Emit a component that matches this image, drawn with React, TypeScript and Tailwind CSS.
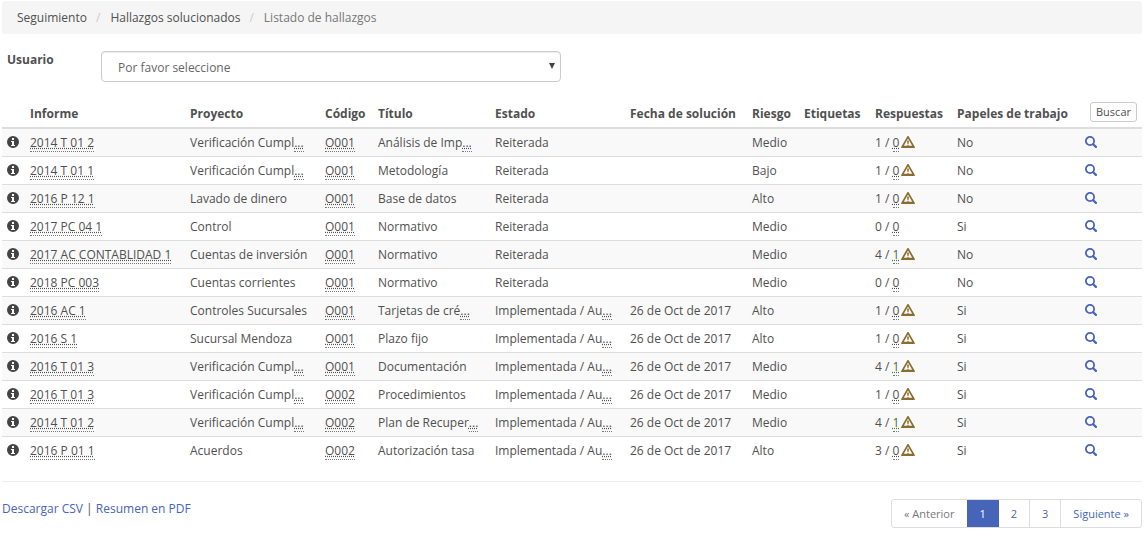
import React from "react";

type Row = {
  informe: string;
  proyecto: string;
  codigo: string;
  titulo: string;
  estado: string;
  fecha: string;
  riesgo: string;
  total: number;
  propias: number;
  papeles: string;
};

const make = (
  informe: string,
  proyecto: string,
  codigo: string,
  titulo: string,
  estado: string,
  fecha: string,
  riesgo: string,
  total: number,
  propias: number,
  papeles: string,
): Row => ({ informe, proyecto, codigo, titulo, estado, fecha, riesgo, total, propias, papeles });

const IMPL = "Implementada / Au...";
const FECHA = "26 de Oct de 2017";

const rows: Row[] = [
  make("2014 T 01 2", "Verificación Cumpl...", "O001", "Análisis de Imp...", "Reiterada", "", "Medio", 1, 0, "No"),
  make("2014 T 01 1", "Verificación Cumpl...", "O001", "Metodología", "Reiterada", "", "Bajo", 1, 0, "No"),
  make("2016 P 12 1", "Lavado de dinero", "O001", "Base de datos", "Reiterada", "", "Alto", 1, 0, "No"),
  make("2017 PC 04 1", "Control", "O001", "Normativo", "Reiterada", "", "Medio", 0, 0, "Si"),
  make("2017 AC CONTABLIDAD 1", "Cuentas de inversión", "O001", "Normativo", "Reiterada", "", "Medio", 4, 1, "No"),
  make("2018 PC 003", "Cuentas corrientes", "O001", "Normativo", "Reiterada", "", "Medio", 0, 0, "No"),
  make("2016 AC 1", "Controles Sucursales", "O001", "Tarjetas de cré...", IMPL, FECHA, "Alto", 1, 0, "Si"),
  make("2016 S 1", "Sucursal Mendoza", "O001", "Plazo fijo", IMPL, FECHA, "Alto", 1, 0, "Si"),
  make("2016 T 01 3", "Verificación Cumpl...", "O001", "Documentación", IMPL, FECHA, "Medio", 4, 1, "Si"),
  make("2016 T 01 3", "Verificación Cumpl...", "O002", "Procedimientos", IMPL, FECHA, "Medio", 1, 0, "Si"),
  make("2014 T 01 2", "Verificación Cumpl...", "O002", "Plan de Recuper...", IMPL, FECHA, "Medio", 4, 1, "Si"),
  make("2016 P 01 1", "Acuerdos", "O002", "Autorización tasa", IMPL, FECHA, "Alto", 3, 0, "Si"),
];

function Abbr({ children, className = "" }: { children: React.ReactNode; className?: string }) {
  return (
    <abbr className={`cursor-help border-b border-dotted border-[#777777] underline decoration-dotted ${className}`}>
      {children}
    </abbr>
  );
}

function Truncated({ text }: { text: string }) {
  if (!text.endsWith("...")) return <>{text}</>;
  return (
    <>
      {text.slice(0, -3)}
      <Abbr>...</Abbr>
    </>
  );
}

function InfoIcon() {
  return (
    <svg viewBox="0 0 12 12" className="size-3" aria-hidden="true">
      <path
        fill="#444444"
        fillRule="evenodd"
        d="M6 0a6 6 0 1 0 0 12a6 6 0 1 0 0-12zM5 2h2v2H5zM4 5h3v4h1v1H4V9h1V6H4z"
      />
    </svg>
  );
}

function WarningIcon() {
  return (
    <svg viewBox="0 0 14 12" className="ml-[2px] inline-block h-3 w-[14px] align-[-1px]" aria-hidden="true">
      <path
        fill="#8a6d2f"
        fillRule="evenodd"
        d="M6.5 0h1L14 11.2L13.6 12H.4L0 11.2zM7 2.6L2.8 9.8H6.4V9h1.2v.8h3.6zM6.2 4.6h1.6v2L7.4 8.2h-.8L6.2 6.6z"
      />
    </svg>
  );
}

function SearchIcon() {
  return (
    <svg viewBox="0 0 12 12" className="size-3" fill="none" stroke="currentColor" aria-hidden="true">
      <circle cx="5" cy="5" r="4.1" strokeWidth="1.8" />
      <path d="M8.2 8.2L10.9 10.9" strokeWidth="2.2" strokeLinecap="round" />
    </svg>
  );
}

const columns: { title: string; width: string }[] = [
  { title: "", width: "w-[23px]" },
  { title: "Informe", width: "w-[160px]" },
  { title: "Proyecto", width: "w-[135px]" },
  { title: "Código", width: "w-[53px]" },
  { title: "Título", width: "w-[117px]" },
  { title: "Estado", width: "w-[135px]" },
  { title: "Fecha de solución", width: "w-[122px]" },
  { title: "Riesgo", width: "w-[52px]" },
  { title: "Etiquetas", width: "w-[71px]" },
  { title: "Respuestas", width: "w-[82px]" },
  { title: "Papeles de trabajo", width: "w-[128px]" },
];

function FindingsTable() {
  return (
    <table className="w-full table-fixed border-separate border-spacing-0 whitespace-nowrap text-left">
      <thead>
        <tr>
          {columns.map((c) => (
            <th key={c.title} scope="col" className={`${c.width} border-b-2 border-[#dddddd] px-[5px] py-1 align-bottom font-bold`}>
              {c.title}
            </th>
          ))}
          <th scope="col" className="w-[62px] border-b-2 border-[#dddddd] px-[5px] pt-1 pb-[5px] align-bottom">
            <button type="button" className="ml-auto block rounded-[3px] border border-[#cccccc] bg-white px-[5px] text-[11px] leading-[18px] font-normal">
              Buscar
            </button>
          </th>
        </tr>
      </thead>
      <tbody className="[&_td]:border-[#dddddd] [&_td]:px-[5px] [&_td]:py-1 [&_tr+tr>td]:border-t [&_tr:nth-child(odd)]:bg-[#f9f9f9]">
        {rows.map((r, i) => (
          <tr key={i}>
            <td>
              <div className="pb-[2px]">
                <InfoIcon />
              </div>
            </td>
            <td>
              <Abbr>{r.informe}</Abbr>
            </td>
            <td>
              <Truncated text={r.proyecto} />
            </td>
            <td>
              <Abbr>{r.codigo}</Abbr>
            </td>
            <td>
              <Truncated text={r.titulo} />
            </td>
            <td>
              <Truncated text={r.estado} />
            </td>
            <td>{r.fecha}</td>
            <td>{r.riesgo}</td>
            <td />
            <td>
              {r.total} / <Abbr className={r.propias > 0 ? "text-[#3c763d]" : ""}>{r.propias}</Abbr>
              {r.total > 0 && <WarningIcon />}
            </td>
            <td>{r.papeles}</td>
            <td>
              <a href="#ver" aria-label="Ver" className="block pb-[2px] text-[#4664b8]">
                <SearchIcon />
              </a>
            </td>
          </tr>
        ))}
      </tbody>
    </table>
  );
}

function Pagination() {
  const link = "border-r border-[#dddddd] px-3 py-[5px] text-[#4664b8]";
  return (
    <nav aria-label="Paginación" className="flex overflow-hidden rounded-[3px] border border-[#dddddd] text-[11px] leading-[17px]">
      <span className="py-[5px] pr-[13px] pl-3 text-[#777777]">« Anterior</span>
      <a href="#p1" aria-current="page" className="-my-px bg-[#4664b8] py-[6px] pr-[13px] pl-3 text-white">1</a>
      <a href="#p2" className={link}>2</a>
      <a href="#p3" className={link}>3</a>
      <a href="#p2" className="px-3 py-[5px] text-[#4664b8]">Siguiente »</a>
    </nav>
  );
}

export default function App() {
  return (
    <main className="bg-white pt-px pr-[6px] pl-[2px] font-['Open_Sans',sans-serif] text-[12px] leading-[19px] text-[#505050]">
      <nav aria-label="Ruta" className="rounded-[3px] bg-[#f5f5f5] px-[15px] py-[7px]">
        <ol className="flex">
          <li><a href="#seguimiento">Seguimiento</a></li>
          <li className="before:pr-[10px] before:pl-[9px] before:text-[#cccccc] before:content-['/']">
            <a href="#solucionados">Hallazgos solucionados</a>
          </li>
          <li className="text-[#777777] before:pr-[10px] before:pl-[9px] before:text-[#cccccc] before:content-['/']">Listado de hallazgos</li>
        </ol>
      </nav>

      <form className="mt-4 flex pl-[5px]">
        <label htmlFor="usuario" className="w-[94px] shrink-0 font-bold">Usuario</label>
        <div className="w-[460px] pt-px">
          <div className="relative">
            <select
              id="usuario"
              className="block h-[31px] w-full appearance-none rounded-[4px] border border-[#cccccc] bg-white px-4 pt-[2px] text-[#666666] shadow-[inset_0_1px_1px_rgba(0,0,0,0.075)]"
            >
              <option>Por favor seleccione</option>
            </select>
            <svg viewBox="0 0 6 6" className="pointer-events-none absolute top-3 right-[6px] size-[6px]" aria-hidden="true">
              <path d="M0 0H6L3 6Z" fill="#444444" />
            </svg>
          </div>
        </div>
      </form>

      <section aria-label="Hallazgos" className="mt-4">
        <FindingsTable />
      </section>

      <footer className="mt-[17px] flex items-start justify-between border-t border-[#eeeeee] pt-[17px]">
        <p>
          <a href="#csv" className="text-[#4664b8]">Descargar CSV</a> | <a href="#pdf" className="text-[#4664b8]">Resumen en PDF</a>
        </p>
        <Pagination />
      </footer>
    </main>
  );
}
